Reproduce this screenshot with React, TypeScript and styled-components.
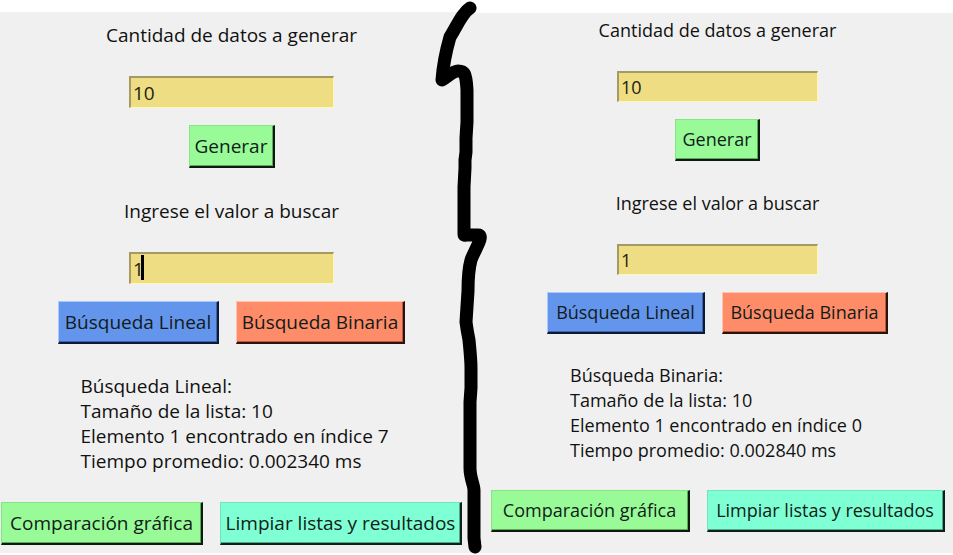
import React, { useState } from "react";
import styled, { createGlobalStyle, css } from "styled-components";

const GlobalStyle = createGlobalStyle`
  *, *::before, *::after { box-sizing: border-box; }
  body {
    margin: 0;
    background: #ffffff;
    color: #111111;
    font-family: "Open Sans", "Noto Sans", sans-serif;
    line-height: 25px;
  }
`;

type Size = "large" | "small";

const Page = styled.main`
  display: grid;
  grid-template-columns: minmax(0, 472fr) 0 minmax(0, 481fr);
  padding-bottom: 2px;
`;

const Panel = styled.section<{ $size: Size }>`
  display: flex;
  flex-direction: column;
  align-items: center;
  background: #f0f0f0;
  ${({ $size }) =>
    $size === "large"
      ? css`
          margin-top: 12px;
          padding: 11px 9px 8px 0;
          font-size: 19px;
        `
      : css`
          margin-top: 13px;
          padding: 5px 0 8px 10px;
          font-size: 18px;
        `}
`;

const Field = styled.div<{ $top?: number }>`
  display: flex;
  flex-direction: column;
  align-items: center;
  gap: 28px;
  margin-top: ${({ $top = 0 }) => $top}px;
`;

const Label = styled.label`
  white-space: nowrap;
`;

const EntryBox = styled.div`
  position: relative;
  display: flex;
`;

const Entry = styled.input<{ $size: Size }>`
  width: ${({ $size }) => ($size === "large" ? 205 : 201)}px;
  height: ${({ $size }) => ($size === "large" ? 32 : 31)}px;
  padding: 0 2px;
  border: solid;
  border-width: 2px 1px 1px 2px;
  border-color: #a59a63 #fff8b4 #fff8b4 #a59a63;
  border-radius: 0;
  outline: none;
  background: #eedd82;
  color: #222211;
  font: inherit;
`;

const Caret = styled.span`
  position: absolute;
  top: 3px;
  bottom: 4px;
  left: calc(1px + 1ch);
  width: 3px;
  background: #000000;
`;

const ButtonRow = styled.div<{ $top?: number }>`
  display: flex;
  justify-content: center;
  gap: 17px;
  margin-top: ${({ $top = 0 }) => $top}px;
`;

const tones = {
  green: { face: "#98fb98", light: "#86e386", shade: "#5fa663", edge: "#0c1c0c" },
  blue: { face: "#6495ed", light: "#a9c8ff", shade: "#3f64b0", edge: "#0d1a33" },
  coral: { face: "#ff8c69", light: "#ffc3ae", shade: "#b85a40", edge: "#2b120b" },
  aqua: { face: "#7fffd4", light: "#70e4bd", shade: "#4fa78a", edge: "#0b211a" },
};

const Button = styled.button<{ $tone: keyof typeof tones; $width: number; $size: Size }>`
  width: ${({ $width }) => $width}px;
  height: ${({ $size }) => ($size === "large" ? 43 : 42)}px;
  padding: 0;
  border: solid ${({ $tone }) => tones[$tone].edge};
  border-width: 1px 2px 2px 1px;
  border-top-color: ${({ $tone }) => tones[$tone].light};
  border-left-color: ${({ $tone }) => tones[$tone].light};
  border-radius: 0;
  box-shadow: inset -1px -1px 0 ${({ $tone }) => tones[$tone].shade};
  background: ${({ $tone }) => tones[$tone].face};
  color: #111c18;
  font: inherit;
  white-space: nowrap;
`;

const Results = styled.output<{ $size: Size }>`
  display: block;
  width: ${({ $size }) => ($size === "large" ? 302 : 295)}px;
  margin: ${({ $size }) => ($size === "large" ? "30px 0 28px" : "29px 0 27px")};
  white-space: pre;
`;

const Divider = styled.div`
  position: relative;
  z-index: 1;
`;

const Stroke = styled.svg`
  position: absolute;
  top: 0;
  left: -38px;
  width: 77px;
  height: 555px;
  overflow: visible;
  pointer-events: none;
`;

interface SearchPanelProps {
  id: string;
  size: Size;
  results: string[];
  caret?: boolean;
}

const widths = {
  large: { generate: 86, linear: 161, binary: 169, compare: 202, clear: 242 },
  small: { generate: 85, linear: 158, binary: 166, compare: 199, clear: 238 },
};

function SearchPanel({ id, size, results, caret }: SearchPanelProps) {
  const [amount, setAmount] = useState("10");
  const [value, setValue] = useState("1");
  const w = widths[size];
  return (
    <Panel $size={size}>
      <Field>
        <Label htmlFor={`${id}-amount`}>Cantidad de datos a generar</Label>
        <EntryBox>
          <Entry id={`${id}-amount`} $size={size} value={amount} onChange={(e) => setAmount(e.target.value)} />
        </EntryBox>
      </Field>
      <ButtonRow $top={17}>
        <Button type="button" $size={size} $tone="green" $width={w.generate}>Generar</Button>
      </ButtonRow>
      <Field $top={size === "large" ? 31 : 30}>
        <Label htmlFor={`${id}-value`}>Ingrese el valor a buscar</Label>
        <EntryBox>
          <Entry id={`${id}-value`} $size={size} value={value} onChange={(e) => setValue(e.target.value)} />
          {caret && <Caret />}
        </EntryBox>
      </Field>
      <ButtonRow $top={17}>
        <Button type="button" $size={size} $tone="blue" $width={w.linear}>Búsqueda Lineal</Button>
        <Button type="button" $size={size} $tone="coral" $width={w.binary}>Búsqueda Binaria</Button>
      </ButtonRow>
      <Results $size={size}>{results.join("\n")}</Results>
      <ButtonRow>
        <Button type="button" $size={size} $tone="green" $width={w.compare}>Comparación gráfica</Button>
        <Button type="button" $size={size} $tone="aqua" $width={w.clear}>Limpiar listas y resultados</Button>
      </ButtonRow>
    </Panel>
  );
}

export default function App() {
  return (
    <>
      <GlobalStyle />
      <Page>
        <SearchPanel
          id="lineal"
          size="large"
          caret
          results={["Búsqueda Lineal:", "Tamaño de la lista: 10", "Elemento 1 encontrado en índice 7", "Tiempo promedio: 0.002340 ms"]}
        />
        <Divider>
          <Stroke viewBox="434 0 77 555" aria-hidden="true">
            <path
              d="M470 8C462 13 457 26 450 37C446 51 443 66 442 80C447 77 453 71 458 71C464 71 466 72 467 90L467 122L466 138L466 152L465 160L465 168L464 187L464 234C464 236 466 235 468 235L478 235C485 235 474 251 471 260C468 271 468 280 468 291L466 322C467 330 468 335 469 340C470 350 471 360 471 368L471 388L470 402L470 468C470 478 474 485 474 490L474 538L475 547"
              fill="none"
              stroke="#000000"
              strokeWidth="13"
              strokeLinecap="round"
              strokeLinejoin="round"
            />
          </Stroke>
        </Divider>
        <SearchPanel
          id="binaria"
          size="small"
          results={["Búsqueda Binaria:", "Tamaño de la lista: 10", "Elemento 1 encontrado en índice 0", "Tiempo promedio: 0.002840 ms"]}
        />
      </Page>
    </>
  );
}
